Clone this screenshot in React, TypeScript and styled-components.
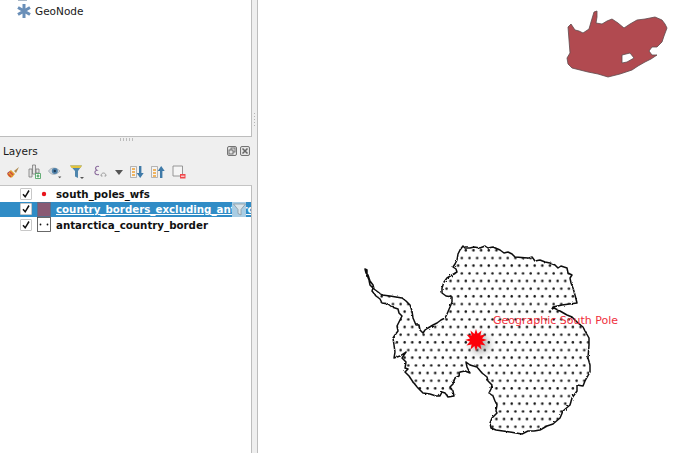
import React from "react";
import styled, { createGlobalStyle } from "styled-components";

const GlobalStyle = createGlobalStyle`
  html, body { margin: 0; padding: 0; background: #fff; overflow: hidden; }
  #root { height: 453px; }
`;

const Window = styled.div`
  display: flex;
  width: 683px;
  height: 453px;
  overflow: hidden;
  font-family: "DejaVu Sans", sans-serif;
  color: #1a1a1a;
`;

const Sidebar = styled.div`
  display: flex;
  flex-direction: column;
  flex: 0 0 252px;
  width: 252px;
  min-width: 0;
  background: #efefef;
`;

const Splitter = styled.div`
  position: relative;
  box-sizing: border-box;
  flex: 0 0 6px;
  background: #efefef;
  border-right: 1px solid #bdbdbd;
`;

const SplitterGrip = styled.div`
  position: absolute;
  left: 2px;
  top: 113px;
  width: 1px;
  height: 14px;
  background: repeating-linear-gradient(to bottom, #b5b5b5 0 1px, transparent 1px 3px);
`;

const BrowserPanel = styled.div`
  flex: 0 0 137px;
  box-sizing: border-box;
  background: #fff;
  border-right: 1px solid #bdbdbd;
  border-bottom: 1px solid #bdbdbd;
`;

const ClippedRow = styled.div`
  height: 1px;
  margin-left: 18px;
  width: 9px;
  background: #a9b7c6;
`;

const BrowserRow = styled.div`
  display: flex;
  align-items: center;
  gap: 3px;
  height: 20px;
  padding-left: 16px;
  font-size: 10.5px;
`;

const DockHandle = styled.div`
  height: 3px;
  margin: 1px auto 0;
  width: 13px;
  background: repeating-linear-gradient(to right, #bcbcbc 0 1px, transparent 1px 3px);
`;

const DockHeader = styled.div`
  display: flex;
  align-items: center;
  justify-content: space-between;
  height: 14px;
  margin-top: 3px;
  padding: 0 2px 0 3px;
  font-size: 10.5px;
`;

const DockButtons = styled.div`
  display: flex;
  gap: 3px;
`;

const Toolbar = styled.div`
  display: flex;
  align-items: center;
  gap: 7px;
  height: 18px;
  margin-top: 5px;
  padding-left: 6px;
`;

const LayerTree = styled.div`
  flex: 1;
  min-height: 0;
  margin-top: 4px;
  overflow: hidden;
  background: #fff;
  border-top: 1px solid #c4c4c4;
  border-right: 1px solid #bdbdbd;
`;

const LayerRow = styled.div<{ $selected?: boolean }>`
  position: relative;
  display: flex;
  align-items: center;
  gap: 5px;
  height: 15.6px;
  padding-left: 20px;
  overflow: hidden;
  white-space: nowrap;
  font-size: 10.25px;
  font-weight: bold;
  background: ${(p) => (p.$selected ? "#308cc6" : "#fff")};
  color: ${(p) => (p.$selected ? "#fff" : "#111")};
  text-decoration: ${(p) => (p.$selected ? "underline" : "none")};
`;

const CheckBox = styled.span`
  flex: 0 0 12px;
  display: flex;
  height: 12px;
  box-sizing: border-box;
  background: #fff;
  border: 1px solid #c8c8c8;
  border-radius: 1px;
`;

const SymbolSlot = styled.span`
  flex: 0 0 14px;
  display: flex;
  align-items: center;
  justify-content: center;
  height: 15px;
`;

const FilterBadge = styled.span`
  position: absolute;
  left: 232px;
  top: 0;
  width: 14px;
  height: 15px;
  display: flex;
  align-items: center;
  justify-content: center;
  background: #a9cde4;
`;

const MapCanvas = styled.div`
  position: relative;
  flex: 1;
  background: #fff;
`;

const MapSvg = styled.svg`
  position: absolute;
  left: 0;
  top: 0;
`;

const PoleLabel = styled.span`
  position: absolute;
  left: 235px;
  top: 314px;
  font-size: 11px;
  line-height: 14px;
  white-space: nowrap;
  color: #f0303c;
`;

const GeoNodeIcon = () => (
  <svg width="16" height="16" viewBox="0 0 16 16" stroke="#6a8fb8" strokeWidth="3">
    <path d="M8 1v14M2 4.5l12 7M14 4.5l-12 7" />
  </svg>
);

const BrushIcon = () => (
  <svg width="14" height="14" viewBox="0 0 14 14">
    <path d="M1 8l4-3 4 4-3 3.5C4 13 2 12 1 8z" fill="#e0a030" />
    <path d="M2 9l3 3M4 7l3 3" stroke="#d0483c" strokeWidth="1.4" />
    <path d="M8 6l5-4-3 6z" fill="#b08a50" />
    <path d="M1.5 8.5l2 -2" stroke="#a03c8c" strokeWidth="1" />
  </svg>
);

const AddGroupIcon = () => (
  <svg width="14" height="16" viewBox="0 0 14 16" fill="#e4e4e4" stroke="#7a7a7a" strokeWidth="0.8">
    <path d="M5.5 1h3v9h-3z" />
    <path d="M2 5h3v8H2zM9 5h3v4H9z" />
    <path d="M8.5 9.5h5v5h-5z" fill="#fff" stroke="#3f9a55" />
    <path d="M11 10.5v3M9.5 12h3" stroke="#3f9a55" strokeWidth="1.2" />
  </svg>
);

const EyeIcon = () => (
  <svg width="14" height="14" viewBox="0 0 14 14">
    <path d="M0.5 6C3 2 8 2 12 6c-4 4.5-9 4.5-11.5 0z" fill="#cfd6dc" stroke="#9aa4ac" strokeWidth="0.7" />
    <circle cx="6.8" cy="6" r="3" fill="#4d7fa8" />
    <circle cx="6.8" cy="6" r="1.2" fill="#1f3a55" />
    <path d="M10 11.5h3.4l-1.7 1.7z" fill="#555" />
  </svg>
);

const FilterIcon = () => (
  <svg width="16" height="16" viewBox="0 0 16 16">
    <path d="M1 1.5h12L9 7v7l-3-1.5V7z" fill="#4f86ad" />
    <path d="M1 1.5h12l-1.6 2.4H2.6z" fill="#e3c33c" />
    <path d="M11 13h4l-2 2z" fill="#555" />
  </svg>
);

const EpsilonIcon = () => (
  <svg width="16" height="16" viewBox="0 0 16 16" fill="none">
    <path d="M7 2.5C3.5 1.5 2.5 5 5 6.3 1.5 7 2.5 11.5 7 10.5" stroke="#8a6a9c" strokeWidth="1.1" />
    <path d="M9 12c0-4 5-4 5 0M9 12h1.5M12.5 12H14" stroke="#9a9a9a" strokeWidth="1" />
  </svg>
);

const ArrowIcon = () => (
  <svg width="8" height="5" viewBox="0 0 8 5">
    <path d="M0 0h8L4 5z" fill="#555" />
  </svg>
);

const ExpandIcon = () => (
  <svg width="14" height="14" viewBox="0 0 14 14">
    <path d="M0.5 1.5h6v11h-6z" fill="#f3f3f3" stroke="#9a9a9a" strokeWidth="0.7" />
    <path d="M2 4h3M2 7h3M2 10h3" stroke="#f0a030" strokeWidth="1.6" />
    <path d="M9 1h2.4v7h2.3l-3.5 5-3.5-5H9z" fill="#3f7aa8" />
  </svg>
);

const CollapseIcon = () => (
  <svg width="14" height="14" viewBox="0 0 14 14">
    <path d="M0.5 1.5h6v11h-6z" fill="#f3f3f3" stroke="#9a9a9a" strokeWidth="0.7" />
    <path d="M2 5h3M2 8h3M2 11h3" stroke="#f0a030" strokeWidth="1.6" />
    <path d="M9 13h2.4V6h2.3L10.2 1 6.7 6H9z" fill="#3f7aa8" />
  </svg>
);

const RemoveIcon = () => (
  <svg width="14" height="14" viewBox="0 0 14 14">
    <path d="M1 1h9.5v10H1z" fill="#f5f5f5" stroke="#8c8c8c" strokeWidth="0.9" />
    <path d="M8 9h5.5v4.5H8z" fill="#f0484c" />
    <path d="M9 11.2h3.5" stroke="#fff" strokeWidth="1" />
  </svg>
);

const FloatIcon = () => (
  <svg width="10" height="10" viewBox="0 0 10 10" fill="none" stroke="#666" strokeWidth="0.9">
    <rect x="0.5" y="0.5" width="9" height="9" rx="1.5" fill="#e4e4e4" />
    <rect x="4" y="2" width="4" height="4" />
    <rect x="2" y="4" width="4" height="4" fill="#e4e4e4" />
  </svg>
);

const CloseIcon = () => (
  <svg width="10" height="10" viewBox="0 0 10 10" fill="none" stroke="#666" strokeWidth="0.9">
    <rect x="0.5" y="0.5" width="9" height="9" rx="1.5" fill="#e4e4e4" />
    <path d="M2.5 2.5l5 5M7.5 2.5l-5 5" strokeWidth="1.5" />
  </svg>
);

const CheckMark = () => (
  <svg width="10" height="10" viewBox="0 0 10 10" fill="none" stroke="#111" strokeWidth="1.5">
    <path d="M2 5.2l2.2 2.6L8 1.5" />
  </svg>
);

const FilterIndicator = () => (
  <svg width="13" height="13" viewBox="0 0 13 13">
    <path d="M0.5 1h12L8 6.5V12L5 10.5v-4z" fill="#d9e4ea" stroke="#8c979e" strokeWidth="0.8" />
  </svg>
);

const PointSymbol = () => (
  <svg width="8" height="8" viewBox="0 0 8 8">
    <circle cx="4" cy="4" r="2.2" fill="#e8141c" />
  </svg>
);

const BorderSymbol = () => (
  <svg width="14" height="15" viewBox="0 0 14 15">
    <rect x="0.5" y="0.5" width="13" height="14" fill="#8a5a74" stroke="#5a6f88" strokeWidth="0.8" />
  </svg>
);

const DottedSymbol = () => (
  <svg width="14" height="15" viewBox="0 0 14 15">
    <rect x="0.5" y="0.5" width="13" height="14" fill="#fff" stroke="#444" strokeWidth="0.8" />
    <circle cx="3.5" cy="7.5" r="0.9" fill="#111" />
    <circle cx="10.5" cy="7.5" r="0.9" fill="#111" />
  </svg>
);

const antarctica =
  "M365 269 L367 270 L367 275 L369 280 L370 285 L373 288 L372 291 L376 296 L380 299 L382 303 L388 304 L392 307 L398 309 L399 313 L402 316 L400 320 L397 326 L398 331 L395 335 L393 338 L394 345 L395 352 L394 358 L400 356 L406 352 L402 358 L406 362 L405 368 L408 369 L405 372 L409 376 L413 382 L418 388 L423 393 L430 394 L436 396 L440 396 L442 392 L445 393 L448 397 L454 396 L453 391 L450 387 L453 384 L455 378 L459 376 L460 372 L465 371 L470 373 L467 367 L466 362 L470 365 L477 367 L482 373 L487 377 L488 381 L492 385 L491 389 L489 393 L493 396 L495 401 L497 405 L496 411 L497 413 L492 418 L490 423 L491 428 L496 430 L503 431 L510 432 L516 433 L522 434 L528 431 L534 431 L540 430 L547 426 L553 424 L560 418 L563 411 L570 405 L572 398 L577 391 L577 385 L583 386 L585 381 L590 372 L590 365 L588 358 L589 345 L589 338 L585 331 L583 327 L578 323 L572 317 L567 315 L560 311 L554 308 L552 309 L553 307 L562 305 L577 303 L575 295 L573 288 L571 283 L570 278 L572 275 L568 273 L567 268 L561 266 L558 268 L555 265 L550 263 L545 262 L540 260 L535 261 L532 257 L529 258 L528 258 L515 257 L512 254 L508 252 L504 253 L500 250 L493 247 L488 248 L485 246 L480 248 L474 247 L470 248 L465 248 L463 246 L460 250 L458 254 L457 260 L455 264 L453 267 L456 269 L457 272 L452 275 L447 278 L444 282 L442 288 L442 293 L446 296 L452 297 L452 302 L450 307 L447 314 L445 318 L441 320 L437 323 L433 325 L428 328 L425 330 L423 333 L420 330 L419 325 L416 325 L413 318 L412 311 L410 305 L406 301 L402 298 L396 297 L390 296 L382 295 L378 292 L374 289 L373 285 L370 281 L368 275 L366 273 Z";

const africa =
  "M568 27 L571 24 L575 30 L579 31 L583 33 L589 29 L591 22 L594 12 L597 11 L597 17 L596 23 L602 24 L607 21 L612 19 L618 23 L624 28 L630 24 L637 20 L645 19 L655 17 L662 20 L665 24 L667 28 L664 36 L662 42 L657 47 L652 47 L649 51 L652 55 L657 55 L651 59 L645 62 L638 66 L632 70 L620 74 L608 77 L598 74 L588 72 L580 70 L572 68 L568 64 L567 58 L570 53 L569 40 Z M622 55 L630 53 L634 58 L627 62 L622 63 Z";

const poleStar = () => {
  const cx = 476;
  const cy = 340;
  const points: string[] = [];
  for (let i = 0; i < 24; i++) {
    const r = i % 2 === 0 ? 11 : 6.2;
    const a = (i * Math.PI) / 12 - Math.PI / 2;
    points.push(`${(cx + r * Math.cos(a)).toFixed(1)},${(cy + r * Math.sin(a)).toFixed(1)}`);
  }
  return points.join(" ");
};

const layers = [
  { name: "south_poles_wfs", symbol: <PointSymbol /> },
  { name: "country_borders_excluding_antarctica", symbol: <BorderSymbol />, selected: true },
  { name: "antarctica_country_border", symbol: <DottedSymbol /> },
];

export default function App() {
  return (
    <>
      <GlobalStyle />
      <Window>
        <Sidebar>
          <BrowserPanel>
            <ClippedRow />
            <BrowserRow>
              <GeoNodeIcon />
              GeoNode
            </BrowserRow>
          </BrowserPanel>
          <DockHandle />
          <DockHeader>
            Layers
            <DockButtons>
              <FloatIcon />
              <CloseIcon />
            </DockButtons>
          </DockHeader>
          <Toolbar>
            <BrushIcon />
            <AddGroupIcon />
            <EyeIcon />
            <FilterIcon />
            <EpsilonIcon />
            <ArrowIcon />
            <ExpandIcon />
            <CollapseIcon />
            <RemoveIcon />
          </Toolbar>
          <LayerTree>
            {layers.map((layer) => (
              <LayerRow key={layer.name} $selected={layer.selected}>
                <CheckBox>
                  <CheckMark />
                </CheckBox>
                <SymbolSlot>{layer.symbol}</SymbolSlot>
                {layer.name}
                {layer.selected && (
                  <FilterBadge>
                    <FilterIndicator />
                  </FilterBadge>
                )}
              </LayerRow>
            ))}
          </LayerTree>
        </Sidebar>
        <Splitter>
          <SplitterGrip />
        </Splitter>
        <MapCanvas>
          <MapSvg width="425" height="453" viewBox="258 0 425 453">
            <defs>
              <pattern id="dots" x="510" y="340" width="7.65" height="15.34" patternUnits="userSpaceOnUse">
                <circle cx="1.7" cy="2.3" r="1.25" fill="#111" />
                <circle cx="5.4" cy="10" r="1.25" fill="#111" />
              </pattern>
              <filter id="glow" x="-60%" y="-60%" width="240%" height="240%">
                <feGaussianBlur stdDeviation="4" />
              </filter>
              <filter id="rough" x="-5%" y="-5%" width="110%" height="110%">
                <feTurbulence type="fractalNoise" baseFrequency="0.35" numOctaves="2" seed="4" />
                <feDisplacementMap in="SourceGraphic" scale="2.5" />
              </filter>
            </defs>
            <path d={africa} fill="#b14a50" fillRule="evenodd" stroke="#5e4a4c" strokeWidth="0.8" />
            <path d={antarctica} fill="url(#dots)" />
            <path d={antarctica} fill="none" stroke="#0c0c0c" strokeWidth="1.5" strokeLinejoin="round" filter="url(#rough)" />
            <polygon points={poleStar()} fill="#555" opacity="0.55" filter="url(#glow)" transform="translate(4 4)" />
            <polygon points={poleStar()} fill="#fc0009" />
          </MapSvg>
          <PoleLabel>Geographic South Pole</PoleLabel>
        </MapCanvas>
      </Window>
    </>
  );
}
